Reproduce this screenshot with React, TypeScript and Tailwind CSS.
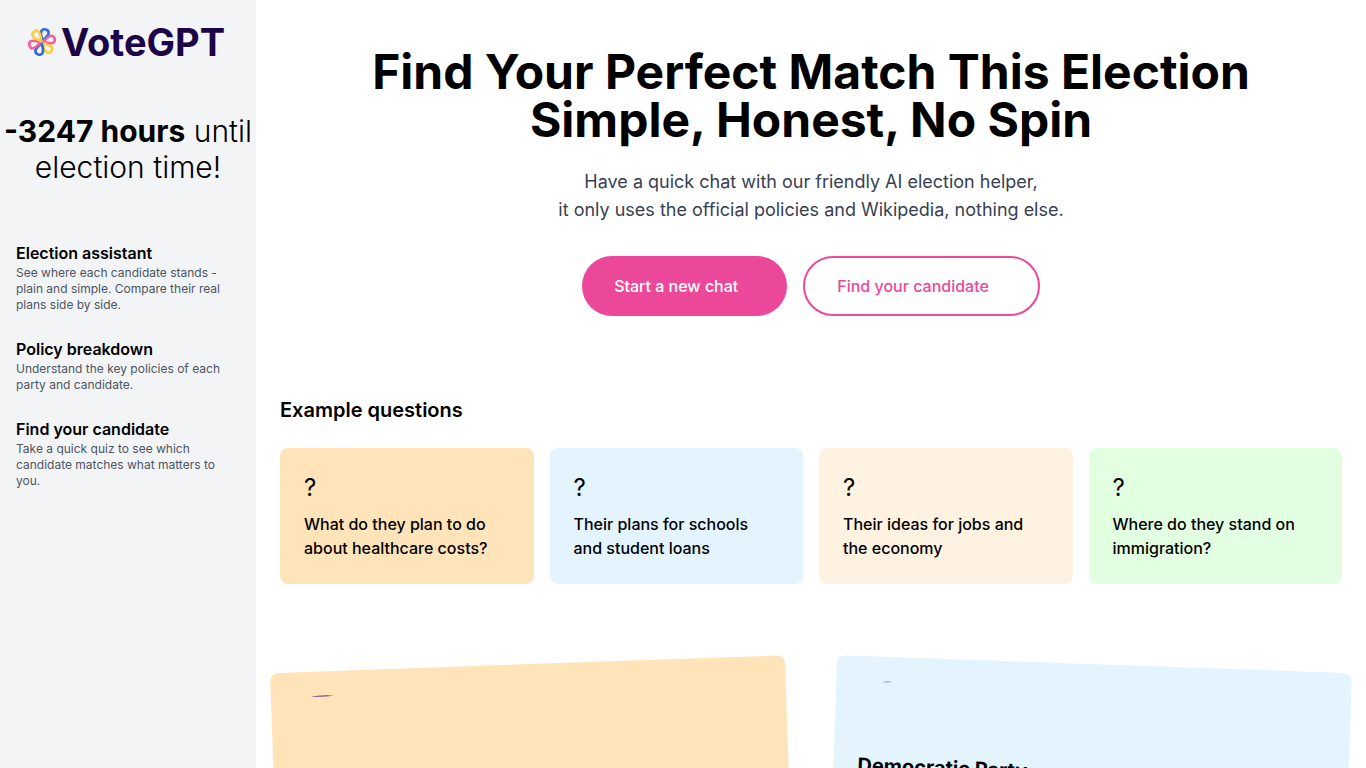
const features = [
  {
    title: "Election assistant",
    text: "See where each candidate stands - plain and simple. Compare their real plans side by side.",
  },
  {
    title: "Policy breakdown",
    text: "Understand the key policies of each party and candidate.",
  },
  {
    title: "Find your candidate",
    text: "Take a quick quiz to see which candidate matches what matters to you.",
  },
];

const questions = [
  { text: "What do they plan to do about healthcare costs?", color: "bg-[#ffe4b9]" },
  { text: "Their plans for schools and student loans", color: "bg-[#e3f4ff]" },
  { text: "Their ideas for jobs and the economy", color: "bg-[#fff2e1]" },
  { text: "Where do they stand on immigration?", color: "bg-[#e3ffe1]" },
];

const petals = [
  { angle: 17, color: "#2a6be0" },
  { angle: 75, color: "#f5609a" },
  { angle: 138, color: "#f8cf3a" },
  { angle: 197, color: "#2a6be0" },
  { angle: 255, color: "#f5609a" },
  { angle: 322, color: "#f8cf3a" },
];

function Logo() {
  return (
    <a href="#" aria-label="VoteGPT" className="flex items-center gap-1 pl-[27px]">
      <svg viewBox="-15 -15 30 30" className="h-[30px] w-[30px] shrink-0" aria-hidden="true">
        {petals.map((p) => (
          <path
            key={p.angle}
            d="M0 -1.2 C-1.6 -4.5 -4.3 -7.4 -3.7 -10.5 C-3 -13.9 3 -13.9 3.7 -10.5 C4.3 -7.4 1.6 -4.5 0 -1.2Z"
            transform={`rotate(${p.angle})`}
            fill="none"
            stroke={p.color}
            strokeWidth="2.6"
            strokeLinejoin="round"
          />
        ))}
      </svg>
      <span className="text-[38px] leading-[40px] font-bold text-[#1c0447]">VoteGPT</span>
    </a>
  );
}

export default function App() {
  return (
    <div className="flex min-h-screen overflow-x-clip bg-white font-['Inter',sans-serif] text-black">
      <aside className="sticky top-0 h-screen w-64 shrink-0 bg-[#f3f4f6]">
        <div className="pt-[22px]">
          <Logo />
        </div>
        <p className="mt-[51px] text-center text-3xl font-light">
          <strong className="font-bold">-3247 hours</strong> until election time!
        </p>
        <nav className="mt-14 flex flex-col gap-6 px-4">
          {features.map((f) => (
            <a key={f.title} href="#" className="block pr-4">
              <h2 className="text-base font-semibold">{f.title}</h2>
              <p className="text-xs text-[#4b5563]">{f.text}</p>
            </a>
          ))}
        </nav>
      </aside>

      <main className="min-w-0 flex-1 px-6 pt-12 pb-16">
        <section className="text-center">
          <h1 className="text-5xl font-bold">
            Find Your Perfect Match This Election
            <br />
            Simple, Honest, No Spin
          </h1>
          <p className="mt-6 text-lg text-[#374151]">
            Have a quick chat with our friendly AI election helper,
            <br />
            it only uses the official policies and Wikipedia, nothing else.
          </p>
          <div className="mt-8 flex justify-center gap-4">
            <button className="h-15 rounded-full bg-[#ec4899] pr-[49px] pl-8 text-base font-medium text-white">
              Start a new chat
            </button>
            <button className="h-15 rounded-full border-2 border-[#ec4899] pr-[49px] pl-8 text-base font-medium text-[#ec4899]">
              Find your candidate
            </button>
          </div>
        </section>

        <section className="mt-20">
          <h2 className="text-xl font-semibold">Example questions</h2>
          <div className="mt-6 grid grid-cols-4 gap-4">
            {questions.map((q) => (
              <button key={q.text} className={`rounded-lg p-6 text-left ${q.color}`}>
                <span className="block text-2xl">?</span>
                <span className="mt-2 block text-base font-medium">{q.text}</span>
              </button>
            ))}
          </div>
        </section>

        <section className="mt-20 grid grid-cols-2 gap-8">
          <article className="min-h-[580px] -rotate-2 rounded-lg bg-[#ffe4b9] p-6">
            <svg viewBox="0 0 56 56" className="h-14 w-14" aria-hidden="true">
              <path d="M16 1 Q28 -0.8 39 0.8 Q28 1.8 16 1Z" fill="#5b3a80" />
            </svg>
          </article>
          <article className="min-h-[580px] rotate-2 rounded-lg bg-[#e3f4ff] p-6">
            <svg viewBox="0 0 56 56" className="h-14 w-14" aria-hidden="true">
              <path d="M22 1.2 Q27 0 32 0.8 Q27 1.4 22 1.2Z" fill="#4b6fa8" />
            </svg>
            <h3 className="mt-[15px] text-xl font-bold">Democratic Party</h3>
          </article>
        </section>
      </main>
    </div>
  );
}
